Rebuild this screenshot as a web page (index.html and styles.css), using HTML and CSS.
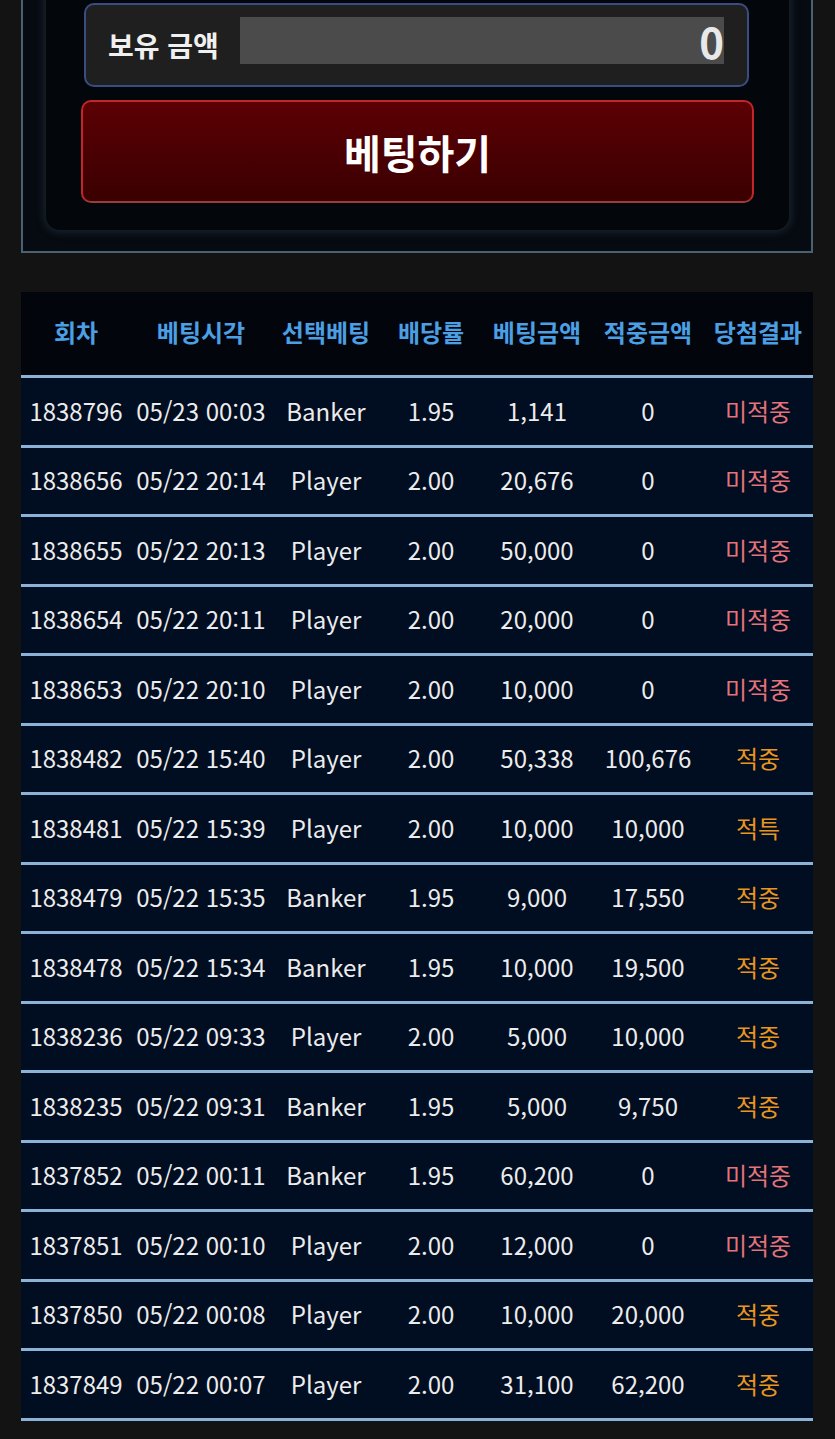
FILE: index.html
```html
<!DOCTYPE html>
<html lang="ko">
<head>
<meta charset="utf-8">
<link rel="stylesheet" href="styles.css">
</head>
<body>
<div class="page">
  <div class="panel">
    <div class="inner">
      <div class="balance">
        <span class="balance-label">보유 금액</span>
        <div class="balance-input">0</div>
      </div>
      <button class="bet-btn">베팅하기</button>
    </div>
  </div>

  <div class="history">
    <div class="row head">
      <div>회차</div><div>베팅시각</div><div>선택베팅</div><div>배당률</div><div>베팅금액</div><div>적중금액</div><div>당첨결과</div>
    </div>
    <div class="row"><div>1838796</div><div>05/23 00:03</div><div>Banker</div><div>1.95</div><div>1,141</div><div>0</div><div class="lose">미적중</div></div>
    <div class="row"><div>1838656</div><div>05/22 20:14</div><div>Player</div><div>2.00</div><div>20,676</div><div>0</div><div class="lose">미적중</div></div>
    <div class="row"><div>1838655</div><div>05/22 20:13</div><div>Player</div><div>2.00</div><div>50,000</div><div>0</div><div class="lose">미적중</div></div>
    <div class="row"><div>1838654</div><div>05/22 20:11</div><div>Player</div><div>2.00</div><div>20,000</div><div>0</div><div class="lose">미적중</div></div>
    <div class="row"><div>1838653</div><div>05/22 20:10</div><div>Player</div><div>2.00</div><div>10,000</div><div>0</div><div class="lose">미적중</div></div>
    <div class="row"><div>1838482</div><div>05/22 15:40</div><div>Player</div><div>2.00</div><div>50,338</div><div>100,676</div><div class="win">적중</div></div>
    <div class="row"><div>1838481</div><div>05/22 15:39</div><div>Player</div><div>2.00</div><div>10,000</div><div>10,000</div><div class="win">적특</div></div>
    <div class="row"><div>1838479</div><div>05/22 15:35</div><div>Banker</div><div>1.95</div><div>9,000</div><div>17,550</div><div class="win">적중</div></div>
    <div class="row"><div>1838478</div><div>05/22 15:34</div><div>Banker</div><div>1.95</div><div>10,000</div><div>19,500</div><div class="win">적중</div></div>
    <div class="row"><div>1838236</div><div>05/22 09:33</div><div>Player</div><div>2.00</div><div>5,000</div><div>10,000</div><div class="win">적중</div></div>
    <div class="row"><div>1838235</div><div>05/22 09:31</div><div>Banker</div><div>1.95</div><div>5,000</div><div>9,750</div><div class="win">적중</div></div>
    <div class="row"><div>1837852</div><div>05/22 00:11</div><div>Banker</div><div>1.95</div><div>60,200</div><div>0</div><div class="lose">미적중</div></div>
    <div class="row"><div>1837851</div><div>05/22 00:10</div><div>Player</div><div>2.00</div><div>12,000</div><div>0</div><div class="lose">미적중</div></div>
    <div class="row"><div>1837850</div><div>05/22 00:08</div><div>Player</div><div>2.00</div><div>10,000</div><div>20,000</div><div class="win">적중</div></div>
    <div class="row"><div>1837849</div><div>05/22 00:07</div><div>Player</div><div>2.00</div><div>31,100</div><div>62,200</div><div class="win">적중</div></div>
  </div>
</div>
</body>
</html>
```

FILE: styles.css
```css
* { box-sizing: border-box; }
html, body {
  margin: 0;
  padding: 0;
  background: #131313;
  font-family: "Noto Sans CJK KR", "Noto Sans", sans-serif;
  color: #eeeeee;
  overflow: hidden;
}
.page {
  width: 835px;
  padding: 0 22px 0 21px;
}
.panel {
  margin-top: -20px;
  border: 2px solid #4b6070;
  border-top: none;
  background: #060b11;
  padding: 0 22px 21px 23px;
}
.inner {
  background: #03060a;
  border-radius: 0 0 14px 14px;
  box-shadow: 0 0 8px 2px rgba(70, 90, 110, 0.35);
  padding: 23px 35px 27px 35px;
}
.balance {
  height: 84px;
  margin: 0 5px 0 3px;
  border: 2px solid #3a4d82;
  border-radius: 10px;
  background: #1f1f1f;
  display: flex;
  align-items: flex-start;
  padding: 12px 23px 0 22px;
}
.balance-label {
  font-size: 28px;
  font-weight: 700;
  line-height: 47px;
  margin-top: 5px;
  color: #f0f0f0;
  white-space: nowrap;
}
.balance-input {
  flex: 1;
  margin-left: 21px;
  height: 47px;
  background: #4b4b4b;
  text-align: right;
  font-size: 42px;
  font-weight: 700;
  line-height: 47px;
  color: #e8e8e8;
  padding-right: 0;
}
.bet-btn {
  display: block;
  width: 100%;
  height: 103px;
  margin-top: 13px;
  border: 2px solid #c1262a;
  border-bottom-color: #9c3a3c;
  border-radius: 10px;
  background: linear-gradient(#5c0004, #3a0001);
  color: #ffffff;
  font-family: "Noto Sans CJK KR", "Noto Sans", sans-serif;
  font-size: 40px;
  font-weight: 700;
  padding: 0;
  cursor: pointer;
}
.history {
  margin-top: 39px;
  width: 792px;
}
.row {
  display: grid;
  grid-template-columns: 110px 140px 110px 100px 112px 110px 110px;
  height: 69.53px;
  border-bottom: 3px solid #8cb3d7;
  background: #010d20;
  align-items: center;
  text-align: center;
  font-size: 24px;
  color: #ececec;
  white-space: nowrap;
}
.row > div { padding-bottom: 2px; }
.row.head {
  height: 86px;
  background: #02050c;
  font-size: 24px;
  font-weight: 700;
  color: #4b9fe3;
}
.row.head > div { padding-bottom: 4px; }
.lose { color: #e4737a; }
.win { color: #e8961f; }
```
